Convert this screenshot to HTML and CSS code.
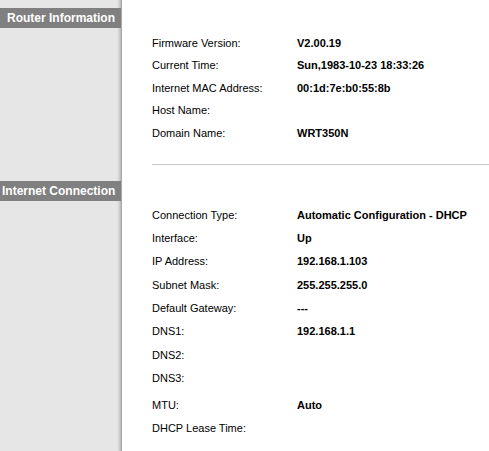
FILE: index.html
```html
<!DOCTYPE html>
<html>
<head>
<meta charset="utf-8">
<link rel="stylesheet" href="styles.css">
</head>
<body>
<div class="page">
  <section class="section first">
    <div class="side"><div class="head">Router Information</div></div>
    <div class="main">
      <div class="row"><span class="label">Firmware Version:</span><span class="value">V2.00.19</span></div>
      <div class="row"><span class="label">Current Time:</span><span class="value">Sun,1983-10-23 18:33:26</span></div>
      <div class="row"><span class="label">Internet MAC Address:</span><span class="value">00:1d:7e:b0:55:8b</span></div>
      <div class="row"><span class="label">Host Name:</span><span class="value"></span></div>
      <div class="row"><span class="label">Domain Name:</span><span class="value">WRT350N</span></div>
      <div class="rule"></div>
    </div>
  </section>
  <section class="section second">
    <div class="side"><div class="head">Internet Connection</div></div>
    <div class="main">
      <div class="row"><span class="label">Connection Type:</span><span class="value">Automatic Configuration - DHCP</span></div>
      <div class="row"><span class="label">Interface:</span><span class="value">Up</span></div>
      <div class="row"><span class="label">IP Address:</span><span class="value">192.168.1.103</span></div>
      <div class="row"><span class="label">Subnet Mask:</span><span class="value">255.255.255.0</span></div>
      <div class="row"><span class="label">Default Gateway:</span><span class="value">---</span></div>
      <div class="row"><span class="label">DNS1:</span><span class="value">192.168.1.1</span></div>
      <div class="row"><span class="label">DNS2:</span><span class="value"></span></div>
      <div class="row"><span class="label">DNS3:</span><span class="value"></span></div>
      <div class="row mtu"><span class="label">MTU:</span><span class="value">Auto</span></div>
      <div class="row"><span class="label">DHCP Lease Time:</span><span class="value"></span></div>
    </div>
  </section>
</div>
</body>
</html>
```

FILE: styles.css
```css
html, body {
  margin: 0;
  padding: 0;
  background: #fff;
}
body {
  font-family: "Liberation Sans", Arial, sans-serif;
  font-size: 11px;
  color: #000;
}
.page {
  min-height: 451px;
  display: flex;
  flex-direction: column;
  background: linear-gradient(to right, #e6e6e6 0, #e6e6e6 117px, #d4d4d4 119px, #b4b4b4 121px, #9c9c9c 122px, #fff 122px);
}
.section {
  display: grid;
  grid-template-columns: 122px 1fr;
}
.second {
  flex: 1;
}
.side {
  padding-top: 8px;
}
.head {
  height: 20px;
  width: 121px;
  background: #808080;
  color: #fff;
  font-weight: bold;
  font-size: 12px;
  line-height: 20px;
  padding-left: 7px;
  box-sizing: border-box;
  white-space: nowrap;
  overflow: hidden;
}
.second .head {
  padding-left: 2px;
}
.main {
  padding-left: 30px;
}
.first .main {
  padding-top: 31.75px;
}
.second .main {
  padding-top: 30.35px;
}
.row {
  display: grid;
  grid-template-columns: 145px 1fr;
  line-height: 13px;
  height: 22.5px;
  align-items: center;
}
.second .row {
  height: 23.3px;
}
.second .row.mtu {
  margin-top: 3.7px;
}
.value {
  font-weight: bold;
}
.rule {
  margin-top: 20px;
  height: 1px;
  background: #c8c8c8;
  margin-bottom: 8px;
}
```
